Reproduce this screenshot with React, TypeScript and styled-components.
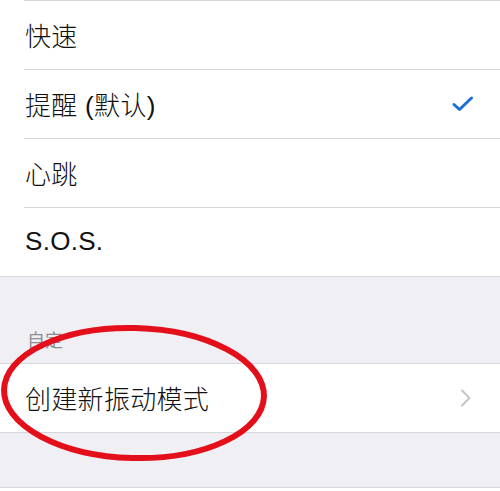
import React from "react";
import styled, { createGlobalStyle } from "styled-components";

const GlobalStyle = createGlobalStyle`
  html, body {
    margin: 0;
    padding: 0;
    background: #efeff4;
  }
  body {
    font-family: "Liberation Sans", "Noto Sans CJK SC", sans-serif;
    -webkit-font-smoothing: antialiased;
  }
`;

const Screen = styled.div`
  position: relative;
  width: 500px;
  height: 491px;
  overflow: hidden;
  background: #efeff4;
`;

const Group = styled.div<{ $topInset?: boolean; $topFull?: boolean }>`
  background: #fff;
  border-top: ${(p) => (p.$topFull ? "1px solid #d6d6da" : "none")};
  border-bottom: 1px solid #d6d6da;

  ${(p) =>
    p.$topInset &&
    `
    &::before {
      content: "";
      display: block;
      height: 1px;
      margin-left: 24px;
      background: #d6d6da;
    }
  `}
`;

const Row = styled.div`
  padding-left: 24px;
  background: #fff;

  &:not(:last-child) > div {
    border-bottom: 1px solid #d6d6da;
  }
`;

const RowInner = styled.div`
  height: 68px;
  display: flex;
  align-items: center;
  justify-content: space-between;
  padding-right: 26px;
`;

const Label = styled.span`
  font-size: 26px;
  font-weight: 300;
  color: #111;
  letter-spacing: 0.3px;
  padding-left: 1px;
  margin-top: -2px;
`;

const SectionHeader = styled.div`
  height: 86px;
  display: flex;
  align-items: flex-end;
  padding-left: 27px;
  box-sizing: border-box;
`;

const HeaderText = styled.span`
  font-size: 18px;
  color: #8e8e93;
  line-height: 1;
  margin-bottom: 13px;
`;

const Spacer = styled.div<{ $h: number }>`
  height: ${(p) => p.$h}px;
`;

const Mark = styled.svg`
  position: absolute;
  left: 0;
  top: 0;
  pointer-events: none;
`;

function Check() {
  return (
    <svg width="22" height="16" viewBox="0 0 22 16">
      <path
        d="M2 8.5 L7.5 13.5 L19.5 2"
        fill="none"
        stroke="#1b6fd6"
        strokeWidth="3"
        strokeLinecap="round"
        strokeLinejoin="round"
      />
    </svg>
  );
}

function Chevron() {
  return (
    <svg width="12" height="18" viewBox="0 0 12 18" style={{ marginRight: 2 }}>
      <path
        d="M2 1.5 L9.5 9 L2 16.5"
        fill="none"
        stroke="#c4c4c9"
        strokeWidth="2"
        strokeLinecap="round"
        strokeLinejoin="round"
      />
    </svg>
  );
}

const patterns = [
  { name: "快速", selected: false },
  { name: "提醒 (默认)", selected: true },
  { name: "心跳", selected: false },
  { name: "S.O.S.", selected: false },
];

export default function App() {
  return (
    <Screen>
      <GlobalStyle />
      <Group $topInset>
        {patterns.map((p) => (
          <Row key={p.name}>
            <RowInner>
              <Label>{p.name}</Label>
              {p.selected && <Check />}
            </RowInner>
          </Row>
        ))}
      </Group>

      <SectionHeader>
        <HeaderText>自定</HeaderText>
      </SectionHeader>

      <Group $topFull>
        <Row>
          <RowInner>
            <Label>创建新振动模式</Label>
            <Chevron />
          </RowInner>
        </Row>
      </Group>

      <Spacer $h={54} />
      <Group $topFull>
        <Row>
          <RowInner />
        </Row>
      </Group>

      <Mark width="500" height="491" viewBox="0 0 500 491">
        <ellipse
          cx="134"
          cy="393"
          rx="130"
          ry="65"
          fill="none"
          stroke="#e3101c"
          strokeWidth="6"
          transform="rotate(1.5 134 393)"
        />
      </Mark>
    </Screen>
  );
}
